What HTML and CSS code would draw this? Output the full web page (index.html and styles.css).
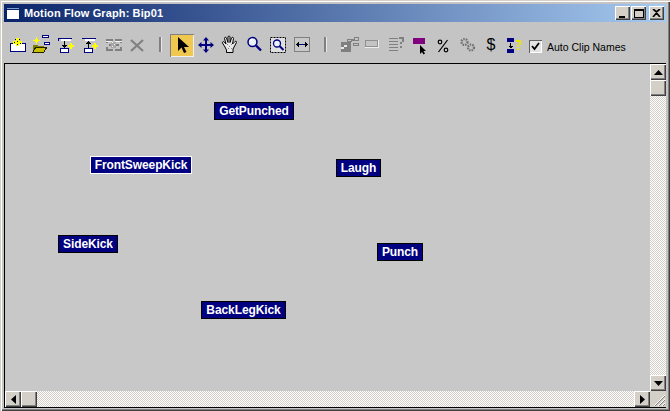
FILE: index.html
```html
<!DOCTYPE html>
<html lang="en">
<head>
<meta charset="utf-8">
<title>Motion Flow Graph: Bip01</title>
<link rel="stylesheet" href="styles.css">
</head>
<body>
<div class="window">
  <header class="titlebar">
    <svg class="app-icon" width="14" height="13" viewBox="0 0 14 13" shape-rendering="crispEdges"><rect width="14" height="13" fill="#fff"/><rect width="14" height="3" fill="#0a246a"/><rect x="1" y="1" width="12" height="1" fill="#7f9fd0"/><rect x="0" y="3" width="1" height="10" fill="#0a246a"/><rect x="13" y="3" width="1" height="10" fill="#0a246a"/><rect y="12" width="14" height="1" fill="#0a246a"/></svg>
    <span class="title-text">Motion Flow Graph: Bip01</span>
    <div class="win-buttons">
      <span class="win-btn"><svg width="9" height="9" viewBox="0 0 9 9" shape-rendering="crispEdges"><rect x="1" y="7" width="6" height="2"/></svg></span>
      <span class="win-btn"><svg width="10" height="9" viewBox="0 0 10 9" shape-rendering="crispEdges"><path d="M0 0h10v2H0zM0 2h1v7H0zM9 2h1v7H9zM0 8h10v1H0z"/></svg></span>
      <span class="win-btn win-close"><svg width="9" height="8" viewBox="0 0 9 8"><path d="M1 0l3.5 3L8 0M1 8l3.5-4L8 8" fill="none" stroke="#000" stroke-width="1.7"/></svg></span>
    </div>
  </header>

  <div class="toolbar">
    <span class="tool"><svg width="24" height="24" shape-rendering="crispEdges"><rect x="5.500" y="10.500" width="15" height="8" fill="#fff" stroke="#000080"/><path d="M11 5h3v3h3v3h-3v2h-3v-2H8V8h3z" fill="#ffff00"/><path d="M10 6h1v1h-1zM14 6h1v1h-1zM12 8h1v1h-1zM9 9h1v1H9zM15 10h1v1h-1zM12 11h1v1h-1z" fill="#000"/></svg></span>
    <span class="tool"><svg width="24" height="24" shape-rendering="crispEdges"><path d="M6 6h3v3H6z" fill="#ffff00"/><path d="M7 4h1v7H7zM4 7h7v1H4z" fill="#ffff00"/><rect x="13.500" y="2.500" width="6" height="2" fill="#fff" stroke="#000080"/><rect x="15.500" y="9.500" width="5" height="2" fill="#fff" stroke="#000080"/><path d="M4 12h4l1 1h6v2H7l-3 4z" fill="#808000"/><path d="M4 19l3-5h11l-3 5z" fill="#c8c000" stroke="#202000" stroke-width="1"/></svg></span>
    <span class="tool"><svg width="24" height="24" shape-rendering="crispEdges"><rect x="5" y="5" width="14" height="1" fill="#000080"/><rect x="8" y="6" width="10" height="2" fill="#fff"/><rect x="5" y="6" width="1" height="2" fill="#000080"/><path d="M11 8h1v4h2l-2.500 3L9 12h2z" fill="#000"/><rect x="7.500" y="15.500" width="8" height="4" fill="#fff" stroke="#000080"/><path d="M17 10h2v2h2v2h-2v2h-2v-2h-2v-2h2z" fill="#ffff00"/></svg></span>
    <span class="tool"><svg width="24" height="24" shape-rendering="crispEdges"><rect x="5" y="5" width="14" height="1" fill="#000080"/><rect x="8" y="6" width="10" height="2" fill="#fff"/><path d="M11 15h1v-4h2l-2.500-3L9 11h2z" fill="#000"/><rect x="7.500" y="15.500" width="8" height="4" fill="#fff" stroke="#000080"/><path d="M17 10h2v2h2v2h-2v2h-2v-2h-2v-2h2z" fill="#ffff00"/></svg></span>
    <span class="tool"><svg width="24" height="24" shape-rendering="crispEdges"><path d="M5 6h7v2H7v2H5zM14 6h7v4h-2V8h-5zM5 14h2v2h5v2H5zM14 16h5v-2h2v4h-7z" fill="#808080"/><path d="M8 11h2v2H8zM14 11h4v2h-4z" fill="#808080"/><path d="M10 9h5v6h-5z" fill="#a8a8a8"/><path d="M11 9h1v1h-1zM13 11h1v1h-1zM11 13h1v1h-1zM5 8h6v1H5zM14 8h7v1h-7z" fill="#f0f0f0"/></svg></span>
    <span class="tool"><svg width="24" height="24"><path d="M6 7l12 11M18 7L6 18" stroke="#808080" stroke-width="2.200" fill="none"/></svg></span>
    <span class="sep"></span>
    <span class="tool tool-active"><svg width="24" height="23" shape-rendering="geometricPrecision"><path d="M8 3v14l3.500-3.500L14 19l2.500-1-2.500-5h5z" fill="#000"/></svg></span>
    <span class="tool"><svg width="24" height="24"><path d="M12 4l3 3.500h-2V11h3.500V9l3.500 3-3.500 3v-2H13v3.500h2L12 20l-3-3.500h2V13H7.500v2L4 12l3.500-3v2H11V7.500H9z" fill="#000080"/></svg></span>
    <span class="tool"><svg width="24" height="24"><path d="M7 14L4.500 10c-.6-1.200 1-2 1.800-1L8 11 6.500 5.500c-.3-1.300 1.500-1.800 2-.5L10 9.500V4c0-1.300 2-1.300 2 0v5.500L13.500 5c.4-1.200 2.200-.8 2 .5L14.500 11 17 8.500c1-.8 2 .2 1.400 1.200L15 16v3.500H8.500V17z" fill="#e8e8e8" stroke="#000" stroke-width="1"/><path d="M9 11h1v1H9zM11 13h1v1h-1zM13 11h1v1h-1zM10 15h1v1h-1zM13 15h1v1h-1z" fill="#888"/></svg></span>
    <span class="tool"><svg width="24" height="24"><circle cx="10.500" cy="9" r="4.500" fill="#e8f0f8" stroke="#000080" stroke-width="1.500"/><path d="M14 12.500l5 5" stroke="#000080" stroke-width="2.400"/><path d="M8 8l2-2" stroke="#fff" stroke-width="1.500"/></svg></span>
    <span class="tool"><svg width="24" height="24"><rect x="4.500" y="4.500" width="15" height="15" fill="#e0e0e0" stroke="#000" stroke-dasharray="2 1"/><circle cx="11" cy="10.500" r="3.500" fill="#e8f0f8" stroke="#000080" stroke-width="1.300"/><path d="M13.500 13l4 4" stroke="#000080" stroke-width="2"/></svg></span>
    <span class="tool"><svg width="24" height="24" shape-rendering="crispEdges"><rect x="4.500" y="4.500" width="15" height="14" fill="#c8c8c8" stroke="#808080"/><rect x="7" y="11" width="10" height="1" fill="#000080"/><path d="M6 11.500L9 9v5zM18 11.500L15 9v5z" fill="#000"/></svg></span>
    <span class="sep"></span>
    <span class="tool"><svg width="24" height="24" shape-rendering="crispEdges"><path d="M6 9h10v10H6z" fill="#808080"/><path d="M12 6h4v2h-4zM19 4h4v3h-4zM17 6h2v1h-2zM18 10h5v2h-5z" fill="none" stroke="#808080"/><rect x="9" y="12" width="3" height="2" fill="#e8e8e8"/><rect x="6" y="14" width="3" height="2" fill="#e8e8e8"/></svg></span>
    <span class="tool"><svg width="24" height="24" shape-rendering="crispEdges"><rect x="6.500" y="7.500" width="12" height="6" fill="none" stroke="#909090"/><path d="M6 14h13v1H6zM19 7h1v8h-1z" fill="#f0f0f0"/></svg></span>
    <span class="tool"><svg width="24" height="24" shape-rendering="crispEdges"><path d="M6 5h9v1H6zM6 8h9v1H6zM6 11h9v1H6zM6 14h9v1H6zM6 17h9v1H6z" fill="#808080"/><path d="M16 4h5v5h-2v2h-2V9h2V6h-3zM17 13h2v2h-2z" fill="#808080"/></svg></span>
    <span class="tool"><svg width="24" height="24" shape-rendering="crispEdges"><rect x="6" y="5" width="12" height="6" fill="#800080"/><path d="M13 12v9l2-2 1.500 2.500 1.500-1-1.500-2.500H19z" fill="#000" shape-rendering="geometricPrecision"/></svg></span>
    <span class="tool"><svg width="24" height="24"><path d="M16.500 7L7.500 19" stroke="#000" stroke-width="1.200"/><circle cx="9" cy="9" r="1.800" fill="none" stroke="#000" stroke-width="1.200"/><circle cx="15" cy="17" r="1.800" fill="none" stroke="#000" stroke-width="1.200"/></svg></span>
    <span class="tool"><svg width="24" height="24"><circle cx="9.500" cy="9" r="3" fill="#c0c0c0" stroke="#707070" stroke-width="2.200" stroke-dasharray="1.500 1"/><circle cx="16" cy="14.500" r="3" fill="#c0c0c0" stroke="#707070" stroke-width="2.200" stroke-dasharray="1.500 1"/></svg></span>
    <span class="tool tool-glyph">$</span>
    <span class="tool"><svg width="24" height="24" shape-rendering="crispEdges"><rect x="4" y="5" width="7" height="4" fill="#000080"/><rect x="4" y="16" width="7" height="4" fill="#000080"/><path d="M7 10h1v3h2l-2.500 2.500L5 13h2z" fill="#000"/><path d="M13 7h5v5h-2v2h-2v-2h2V9h-3zM14 15h2v2h-2z" fill="#e8e800"/></svg></span>
    <label class="check"><span class="check-box"><svg width="9" height="9" viewBox="0 0 9 9"><path d="M1 4l2.500 3L8 1" fill="none" stroke="#000" stroke-width="1.800"/></svg></span>Auto Clip Names</label>
  </div>

  <main class="frame">
    <div class="frame-row">
      <section class="canvas">
        <div class="node node-a">GetPunched</div>
        <div class="node node-b node-selected">FrontSweepKick</div>
        <div class="node node-c">Laugh</div>
        <div class="node node-d">SideKick</div>
        <div class="node node-e">Punch</div>
        <div class="node node-f">BackLegKick</div>
      </section>
      <div class="vscroll">
        <span class="sb-btn"><svg width="9" height="5"><path d="M4.500 0L9 5H0z"/></svg></span>
        <span class="sb-btn sb-thumb-v"></span>
        <span class="sb-track"></span>
        <span class="sb-btn"><svg width="9" height="5"><path d="M0 0h9L4.500 5z"/></svg></span>
      </div>
    </div>
    <div class="hscroll">
      <span class="sb-btn"><svg width="5" height="9"><path d="M5 0v9L0 4.500z"/></svg></span>
      <span class="sb-btn sb-thumb-h"></span>
      <span class="sb-track"></span>
      <span class="sb-btn"><svg width="5" height="9"><path d="M0 0v9l5-4.500z"/></svg></span>
      <span class="grip"><svg width="16" height="16" shape-rendering="geometricPrecision"><path d="M15 4L4 15M15 8l-7 7M15 12l-3 3" stroke="#fff" stroke-width="1"/><path d="M15 5L5 15M15 9l-6 6M15 13l-2 2" stroke="#808080" stroke-width="1"/></svg></span>
    </div>
  </main>
</div>
</body>
</html>
```
FILE: styles.css
```css
* { box-sizing: border-box; }
html, body { margin: 0; padding: 0; }
body {
  width: 670px;
  height: 411px;
  overflow: hidden;
  background: #d4d0c8;
  font-family: "Liberation Sans", Arial, sans-serif;
}
.window {
  width: 670px;
  height: 411px;
  padding: 4px 4px 3px;
  display: flex;
  flex-direction: column;
  background: #c4c4c4;
  box-shadow: inset 1px 1px 0 #d4d0c8, inset 2px 2px 0 #fff, inset -1px -1px 0 #404040, inset -2px -2px 0 #808080;
}
.titlebar {
  height: 18px;
  flex: none;
  display: flex;
  align-items: center;
  padding: 0 2px;
  background: linear-gradient(90deg, #0a246a, #a6caf0);
}
.app-icon { flex: none; }
.title-text {
  margin-left: 4px;
  color: #fff;
  font-size: 11px;
  font-weight: 700;
  letter-spacing: 0.12px;
  white-space: nowrap;
}
.win-buttons {
  margin-left: auto;
  display: flex;
  gap: 1px;
}
.win-btn {
  width: 15px;
  height: 14px;
  display: flex;
  align-items: center;
  justify-content: center;
  background: #d4d0c8;
  box-shadow: inset 1px 1px 0 #fff, inset -1px -1px 0 #404040, inset -2px -2px 0 #808080;
}
.win-close { margin-left: 2px; }
.toolbar {
  height: 41px;
  flex: none;
  display: flex;
  align-items: flex-start;
  padding: 11px 0 0 1px;
}
.tool {
  width: 24px;
  height: 24px;
  flex: none;
  display: block;
}
.tool svg { display: block; }
.tool-active {
  height: 23px;
  margin-top: 1px;
  background: #f0c850;
  box-shadow: inset 1px 1px 0 #808080, inset -1px -1px 0 #f0f0f0;
}
.tool-glyph {
  font-size: 16px;
  line-height: 24px;
  text-align: center;
  color: #000;
}
.sep {
  width: 2px;
  height: 15px;
  flex: none;
  margin: 4px 9px 0 10px;
  background: #808080;
  box-shadow: 1px 0 0 #e8e8e8;
}
.check {
  margin: 7px 0 0 2px;
  display: flex;
  align-items: center;
  font-size: 10.500px;
  color: #000;
  white-space: nowrap;
}
.check-box {
  width: 13px;
  height: 13px;
  margin-right: 5px;
  display: flex;
  align-items: center;
  justify-content: center;
  background: #e4e4e4;
  box-shadow: inset 1px 1px 0 #606060, inset -1px -1px 0 #fff;
}
.frame {
  flex: 1;
  min-height: 0;
  display: flex;
  flex-direction: column;
  border-top: 1px solid #000;
  border-left: 1px solid #000;
  border-bottom: 1px solid #000;
}
.frame-row {
  flex: 1;
  min-height: 0;
  display: flex;
}
.canvas {
  flex: 1;
  position: relative;
  background: #c8c8c8;
}
.node {
  position: absolute;
  height: 18px;
  display: flex;
  align-items: center;
  justify-content: center;
  background: #000080;
  border: 1px solid #000;
  color: #fff;
  font-size: 12px;
  font-weight: 700;
  letter-spacing: -0.1px;
  white-space: nowrap;
}
.node-selected { border-color: #fff; }
.node-a { left: 209px; top: 38px; width: 80px; }
.node-b { left: 85px; top: 92px; width: 102px; }
.node-c { left: 331px; top: 95px; width: 45px; }
.node-d { left: 53px; top: 171px; width: 60px; }
.node-e { left: 372px; top: 179px; width: 46px; }
.node-f { left: 196px; top: 237px; width: 85px; }
.vscroll {
  width: 16px;
  flex: none;
  display: flex;
  flex-direction: column;
}
.hscroll {
  height: 16px;
  flex: none;
  display: flex;
}
.sb-btn {
  width: 16px;
  height: 16px;
  flex: none;
  display: flex;
  align-items: center;
  justify-content: center;
  background: #d4d0c8;
  box-shadow: inset 1px 1px 0 #fff, inset -1px -1px 0 #404040, inset -2px -2px 0 #808080;
}
.sb-track {
  flex: 1;
  background: conic-gradient(#fff 25%, #d4d0c8 0 50%, #fff 0 75%, #d4d0c8 0) 0 0 / 2px 2px;
}
.grip {
  width: 16px;
  height: 16px;
  flex: none;
  background: #d4d0c8;
}
.grip svg { display: block; }
```
